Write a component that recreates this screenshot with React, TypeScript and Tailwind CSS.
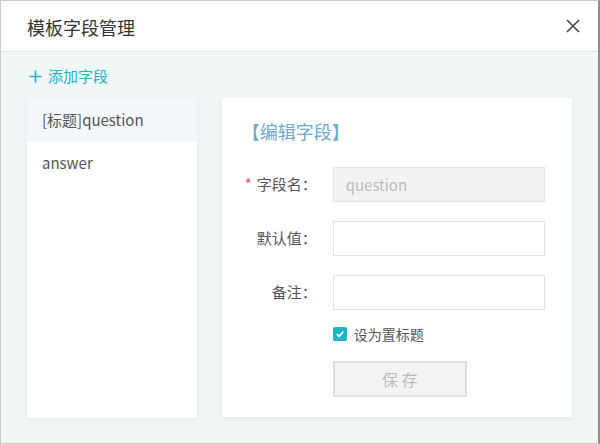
import React from "react";

const fields = [
  { name: "question", isTitle: true },
  { name: "answer", isTitle: false },
];

function CloseIcon() {
  return (
    <svg width="14" height="14" viewBox="0 0 14 14" className="text-[#444]">
      <path d="M1 1L13 13M13 1L1 13" stroke="currentColor" strokeWidth="1.6" fill="none" />
    </svg>
  );
}

function PlusIcon() {
  return (
    <svg width="13" height="13" viewBox="0 0 13 13" className="text-[#1eb4c5]">
      <path d="M6.5 0.5V12.5M0.5 6.5H12.5" stroke="currentColor" strokeWidth="1.6" fill="none" />
    </svg>
  );
}

function FormRow({ label, required, children }: { label: string; required?: boolean; children: React.ReactNode }) {
  return (
    <div className="flex items-center">
      <div className="w-[95px] text-right text-[15px] text-[#555]">
        {required && <span className="mr-[5px] text-[#e8545a]">*</span>}
        {label}
      </div>
      <div className="ml-[16px]">{children}</div>
    </div>
  );
}

export default function App() {
  return (
    <div className="flex h-[444px] w-[600px] flex-col border border-r-2 border-[#c9cccd] border-r-[#8c8f90] font-['Noto_Sans_CJK_SC','Noto_Sans',sans-serif]">
      <header className="flex h-[51px] shrink-0 items-center justify-between border-b border-[#e1e5e7] bg-white pl-[26px] pr-[18px]">
        <h1 className="pt-[3px] text-[18px] text-[#333]">模板字段管理</h1>
        <CloseIcon />
      </header>

      <div className="flex-1 bg-[#f1f6f7] px-[26px]">
        <button className="ml-[2px] mt-[14px] flex h-[20px] items-center gap-[6px] text-[15px] text-[#1eb4c5]">
          <PlusIcon />
          添加字段
        </button>

        <div className="mt-[12px] flex items-start gap-[25px]">
          {/* field list */}
          <div className="h-[320px] w-[170px] bg-white shadow-[0_2px_6px_rgba(0,0,0,0.05)]">
            {fields.map((f, i) => (
              <div
                key={f.name}
                className={
                  i === 0
                    ? "flex h-[44px] items-center bg-[#f3f8fa] pl-[15px] text-[15px] text-[#555]"
                    : "flex h-[42px] items-center pl-[15px] text-[15px] text-[#555]"
                }
              >
                {f.isTitle ? "[标题]" : ""}
                {f.name}
              </div>
            ))}
          </div>

          {/* editor */}
          <div className="h-[319px] w-[351px] bg-white pt-[21px] shadow-[0_2px_6px_rgba(0,0,0,0.06)]">
            <h2 className="pl-[20px] text-[18px] leading-[24px] text-[#6ea8cc]">【编辑字段】</h2>

            <div className="mt-[24px] flex flex-col gap-[19px]">
              <FormRow label="字段名：" required>
                <input
                  disabled
                  value="question"
                  className="h-[35px] w-[212px] border border-[#e4e4e4] bg-[#f3f3f3] pl-[12px] text-[15px] text-[#bbb]"
                />
              </FormRow>
              <FormRow label="默认值：">
                <input className="h-[35px] w-[212px] border border-[#e2e2e2] bg-white pl-[12px] text-[15px]" />
              </FormRow>
              <FormRow label="备注：">
                <input className="h-[35px] w-[212px] border border-[#e2e2e2] bg-white pl-[12px] text-[15px]" />
              </FormRow>
            </div>

            <div className="ml-[111px] mt-[14px] flex h-[20px] items-center gap-[7px]">
              <span className="grid h-[14px] w-[14px] place-items-center rounded-[2px] bg-[#1eb4c5]">
                <svg width="10" height="10" viewBox="0 0 10 10">
                  <path d="M1.8 5.2L4 7.3L8.3 2.6" stroke="white" strokeWidth="1.8" fill="none" />
                </svg>
              </span>
              <span className="text-[14px] text-[#555]">设为置标题</span>
            </div>

            <button className="ml-[111px] mt-[17px] h-[36px] w-[134px] border-2 border-[#e0e0e0] bg-[#f4f4f4] text-[16px] text-[#bbb]">
              保&nbsp;存
            </button>
          </div>
        </div>
      </div>
    </div>
  );
}
